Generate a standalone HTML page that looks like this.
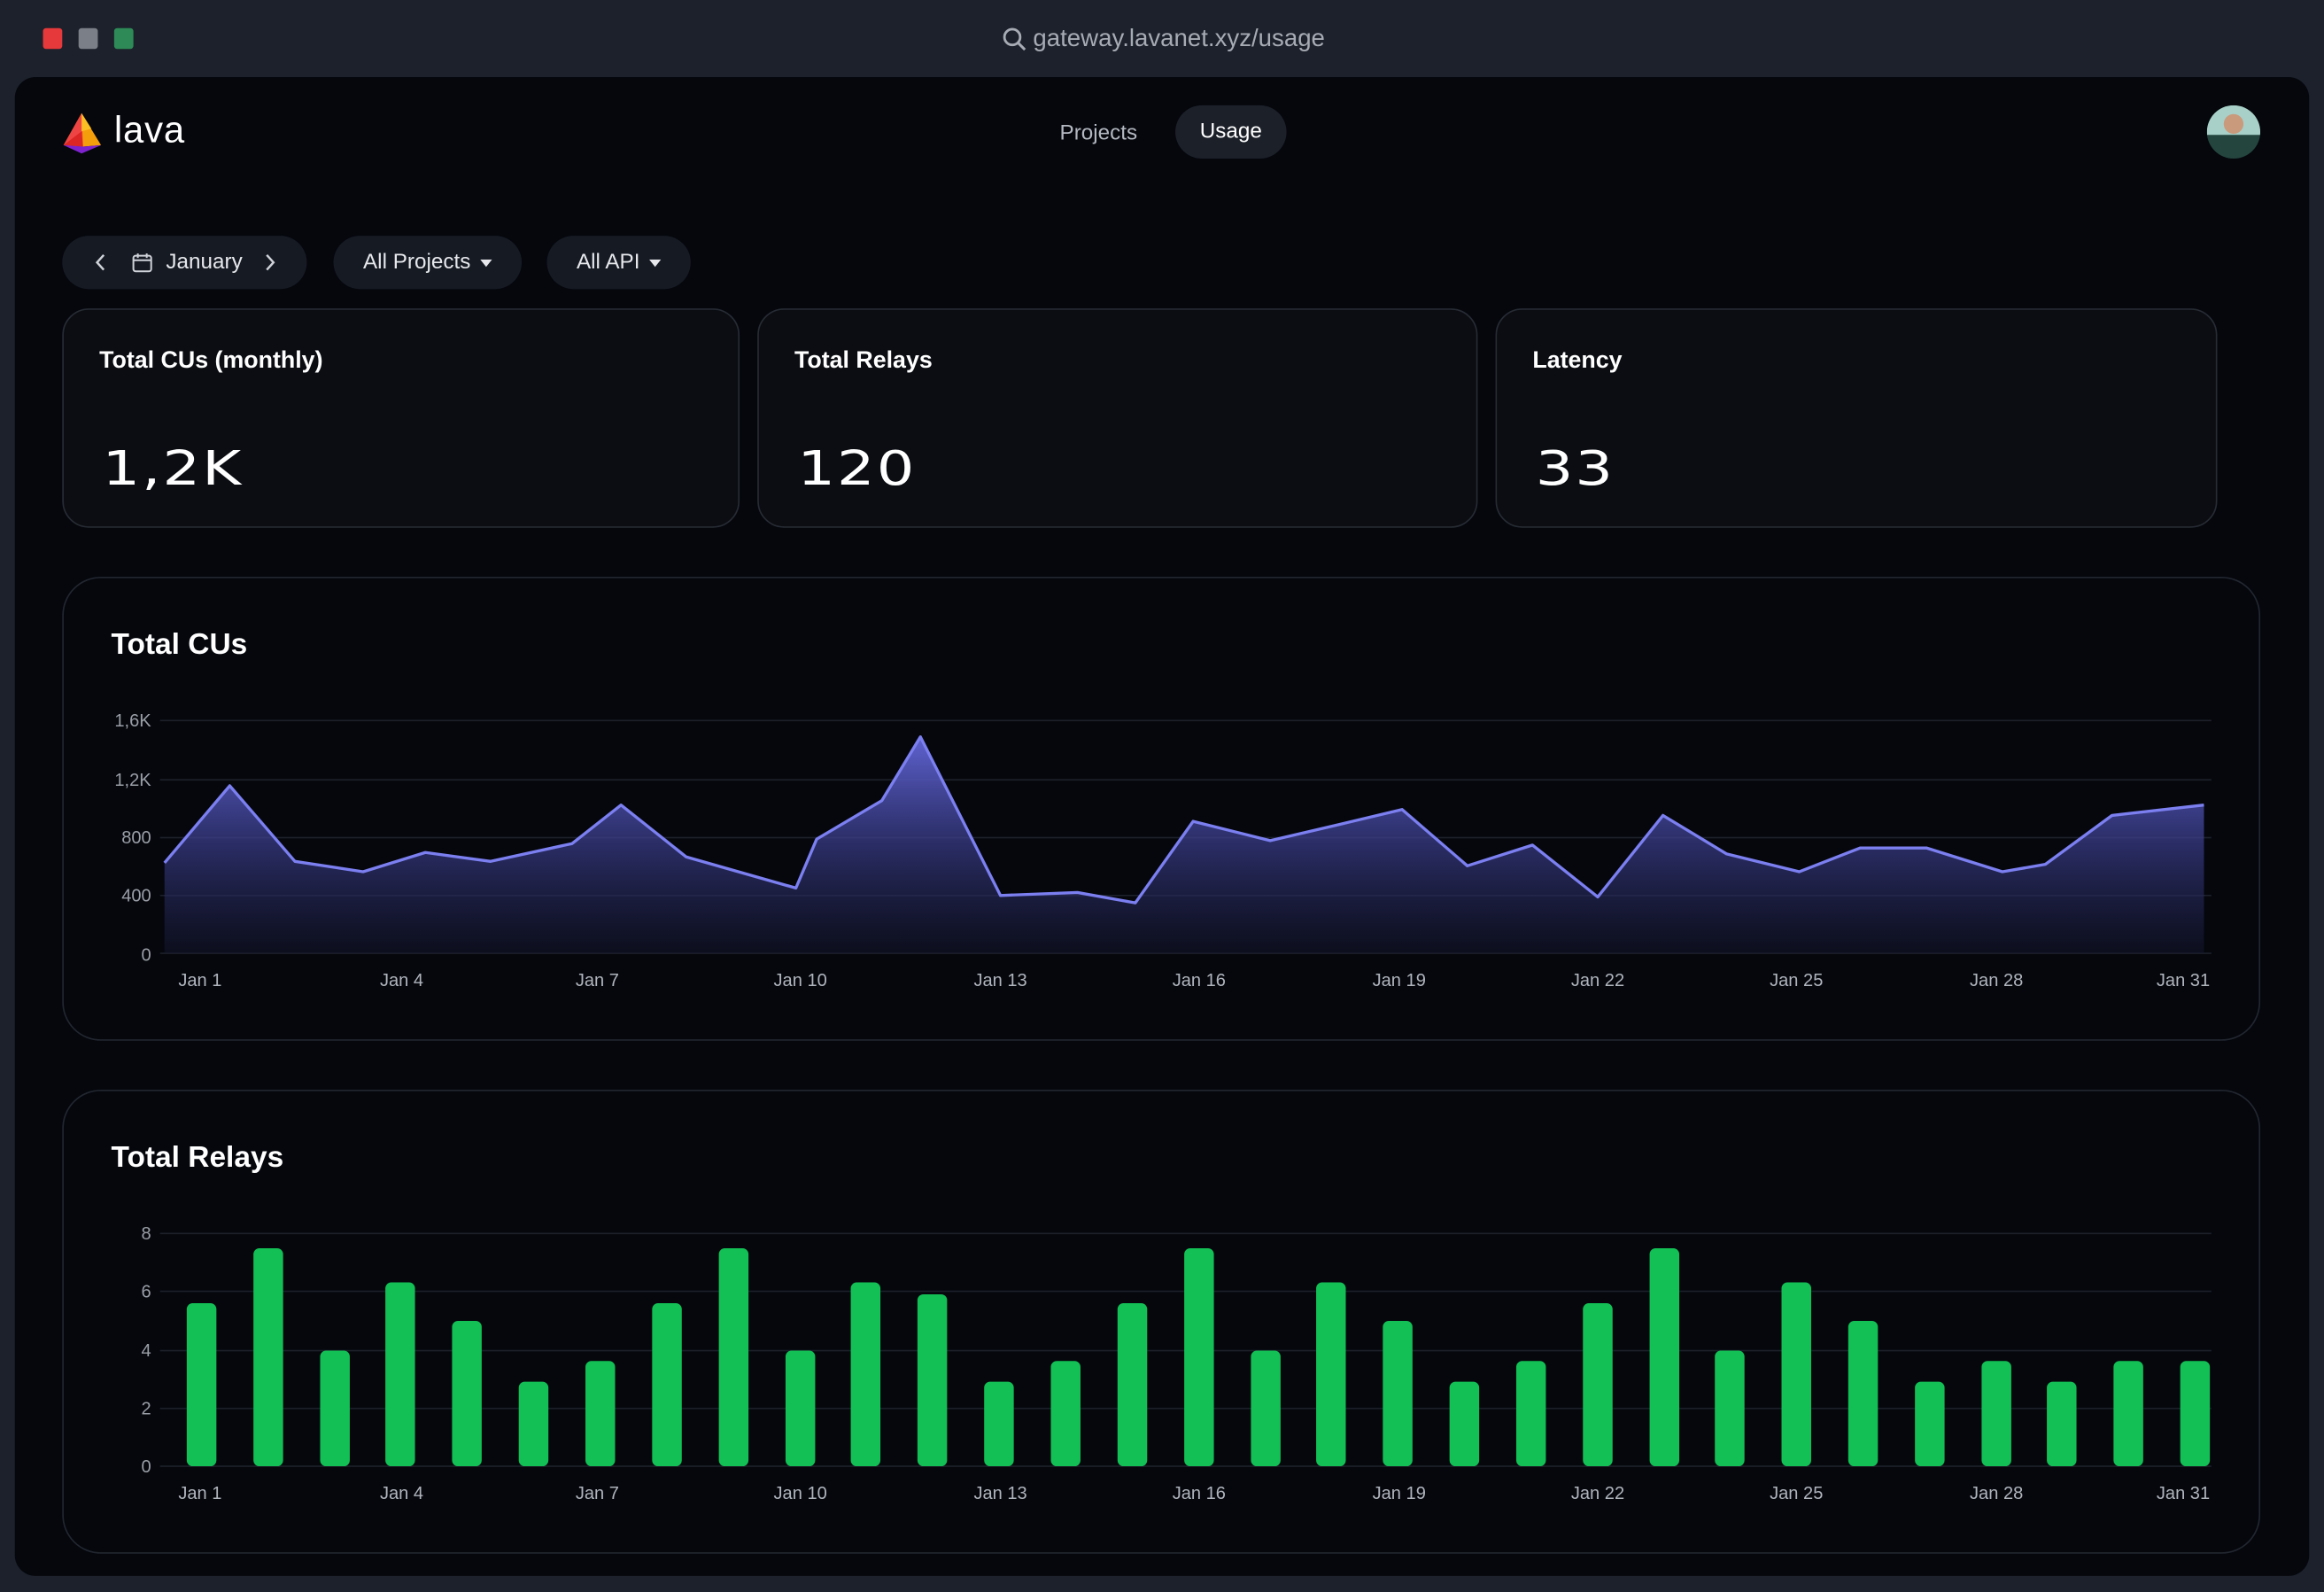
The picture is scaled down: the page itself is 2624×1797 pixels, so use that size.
<!DOCTYPE html>
<html><head><meta charset="utf-8"><style>
html,body{margin:0;padding:0;background:#1c212b;width:2624px;height:1796px;overflow:hidden}
#s{position:absolute;left:0;top:0;width:1568px;height:1074px;transform:scale(1.67347);transform-origin:0 0;font-family:"Liberation Sans",Arial,sans-serif;color:#fff}
.abs{position:absolute}
.pill{position:absolute;top:159px;height:36px;border-radius:18px;background:#161a23;color:#e6e8ec;font-size:14.5px;line-height:36px}
.card{position:absolute;top:208px;height:146px;border:1px solid #272b33;border-radius:18px;background:#0b0d12}
.card .t{position:absolute;left:24px;top:26px;font-size:16px;font-weight:bold}
.card .v{position:absolute;left:26px;top:88px;font-size:32px;letter-spacing:1px;font-family:"DejaVu Sans",sans-serif;transform:scaleX(1.25);transform-origin:0 0;font-weight:normal}
.big{position:absolute;left:42px;width:1481px;height:311px;border:1px solid #22262f;border-radius:26px;background:#05070d}
.big .t{position:absolute;left:32px;font-size:20px;font-weight:bold}
</style></head><body><div id="s">
<div class="abs" style="left:29px;top:19px;width:13px;height:14px;border-radius:2px;background:#e5393b"></div>
<div class="abs" style="left:53px;top:19px;width:13px;height:14px;border-radius:2px;background:#7b7f87"></div>
<div class="abs" style="left:77px;top:19px;width:13px;height:14px;border-radius:2px;background:#2e8b57"></div>
<svg class="abs" style="left:676px;top:18px" width="17" height="17" viewBox="0 0 17 17"><circle cx="7" cy="7" r="5.3" fill="none" stroke="#a6abb4" stroke-width="1.7"/><path d="M11 11l4.5 4.5" stroke="#a6abb4" stroke-width="1.8"/></svg>
<div class="abs" style="left:697px;top:17px;font-size:16.5px;color:#a6abb4">gateway.lavanet.xyz/usage</div>
<div class="abs" style="left:10px;top:52px;width:1548px;height:1011px;background:#05070d;border-radius:14px"></div>
<svg class="abs" style="left:41px;top:75px" width="30" height="29" viewBox="0 0 32 30"><polygon points="15,1 29,24 16,25 2,24" fill="#f59e0b"/><polygon points="15,1 2,24 16,25" fill="#ef4444"/><polygon points="2,24 16,25 15,14" fill="#dc2626"/><polygon points="2,24 15,30 29,24 16,25" fill="#7e22ce"/><polygon points="15,1 22,12 15,14" fill="#fbbf24"/></svg>
<div class="abs" style="left:77px;top:74px;font-size:25px;color:#fff;letter-spacing:0.5px">lava</div>
<div class="abs" style="left:715px;top:82px;font-size:14.5px;color:#b4b8c0">Projects</div>
<div class="abs" style="left:793px;top:71px;width:75px;height:36px;border-radius:18px;background:#1c2029;font-size:14.5px;line-height:37px;text-align:center;color:#fff">Usage</div>
<div class="abs" style="left:1489px;top:71px;width:36px;height:36px;border-radius:50%;background:radial-gradient(circle at 50% 35%,#c99a7c 0 22%,transparent 23%),linear-gradient(#a8d0c8 0 55%,#24453e 56%)"></div>
<div class="pill" style="left:42px;width:165px">
<svg class="abs" style="left:22px;top:12px" width="8" height="12" viewBox="0 0 8 12"><path d="M6 1L1.5 6L6 11" fill="none" stroke="#cfd2d8" stroke-width="1.5"/></svg>
<svg class="abs" style="left:47px;top:11px" width="14" height="14" viewBox="0 0 14 14"><rect x="1" y="2.5" width="12" height="10.5" rx="1.5" fill="none" stroke="#cfd2d8" stroke-width="1.2"/><path d="M4 1v3M10 1v3M1 5.5h12" stroke="#cfd2d8" stroke-width="1.2"/></svg>
<span style="position:absolute;left:70px">January</span>
<svg class="abs" style="left:136px;top:12px" width="8" height="12" viewBox="0 0 8 12"><path d="M2 1L6.5 6L2 11" fill="none" stroke="#cfd2d8" stroke-width="1.5"/></svg></div>
<div class="pill" style="left:225px;width:127px"><span style="position:absolute;left:20px">All Projects</span><svg class="abs" style="left:99px;top:16px" width="8" height="6"><path d="M0 0h8L4 5z" fill="#e6e8ec"/></svg></div>
<div class="pill" style="left:369px;width:97px"><span style="position:absolute;left:20px">All API</span><svg class="abs" style="left:69px;top:16px" width="8" height="6"><path d="M0 0h8L4 5z" fill="#e6e8ec"/></svg></div>
<div class="card" style="left:42px;width:455px"><div class="t">Total CUs (monthly)</div><div class="v">1,2K</div></div>
<div class="card" style="left:511px;width:484px"><div class="t">Total Relays</div><div class="v">120</div></div>
<div class="card" style="left:1009px;width:485px"><div class="t">Latency</div><div class="v">33</div></div>
<div class="big" style="top:389px"><div class="t" style="top:34px">Total CUs</div></div>
<div class="big" style="top:735px"><div class="t" style="top:34px">Total Relays</div></div>
<svg class="abs" style="left:0;top:0" width="1568" height="1074" viewBox="0 0 1568 1074" font-family="Liberation Sans,Arial,sans-serif">
<defs><linearGradient id="g" x1="0" x2="0" y1="497" y2="643" gradientUnits="userSpaceOnUse"><stop offset="0" stop-color="#6468dc" stop-opacity="0.95"/><stop offset="0.5" stop-color="#3a3d8a" stop-opacity="0.7"/><stop offset="1" stop-color="#14162e" stop-opacity="0.5"/></linearGradient>
<filter id="gl" x="-50%" y="-20%" width="200%" height="140%"><feGaussianBlur stdDeviation="3"/></filter></defs>
<g stroke="#1d2029" stroke-width="1"><path d="M108 486H1492M108 526H1492M108 565H1492M108 604H1492M108 643H1492"/><path d="M108 832H1492M108 871H1492M108 911H1492M108 950H1492M108 989H1492"/></g>
<g fill="#9a9ea6" font-size="12" text-anchor="end"><text x="102" y="490">1,6K</text><text x="102" y="530">1,2K</text><text x="102" y="569">800</text><text x="102" y="608">400</text><text x="102" y="648">0</text>
<text x="102" y="836">8</text><text x="102" y="875">6</text><text x="102" y="915">4</text><text x="102" y="954">2</text><text x="102" y="993">0</text></g>
<polygon fill="url(#g)" points="111,643 111,582 155,530 199,581 245,588 287,575 331,581 386,569 419,543 463,578 537,599 551,566 595,540 621,497 675,604 727,602 766,609 805,554 857,567 904,556 946,546 990,584 1034,570 1078,605 1122,550 1165,576 1214,588 1255,572 1300,572 1351,588 1380,583 1425,550 1487,543 1487,643"/>
<polyline fill="none" stroke="#7b7ff0" stroke-width="2" stroke-linejoin="round" points="111,582 155,530 199,581 245,588 287,575 331,581 386,569 419,543 463,578 537,599 551,566 595,540 621,497 675,604 727,602 766,609 805,554 857,567 904,556 946,546 990,584 1034,570 1078,605 1122,550 1165,576 1214,588 1255,572 1300,572 1351,588 1380,583 1425,550 1487,543"/>
<g fill="#b0b4bc" font-size="12" text-anchor="middle"><text x="135" y="665">Jan 1</text><text x="271" y="665">Jan 4</text><text x="403" y="665">Jan 7</text><text x="540" y="665">Jan 10</text><text x="675" y="665">Jan 13</text><text x="809" y="665">Jan 16</text><text x="944" y="665">Jan 19</text><text x="1078" y="665">Jan 22</text><text x="1212" y="665">Jan 25</text><text x="1347" y="665">Jan 28</text><text x="1473" y="665">Jan 31</text></g>
<g fill="#b0b4bc" font-size="12" text-anchor="middle"><text x="135" y="1011">Jan 1</text><text x="271" y="1011">Jan 4</text><text x="403" y="1011">Jan 7</text><text x="540" y="1011">Jan 10</text><text x="675" y="1011">Jan 13</text><text x="809" y="1011">Jan 16</text><text x="944" y="1011">Jan 19</text><text x="1078" y="1011">Jan 22</text><text x="1212" y="1011">Jan 25</text><text x="1347" y="1011">Jan 28</text><text x="1473" y="1011">Jan 31</text></g>
<g id="bars" fill="#12c055">
<rect x="126" y="879" width="20" height="110" rx="4"/><rect x="171" y="842" width="20" height="147" rx="4"/><rect x="216" y="911" width="20" height="78" rx="4"/><rect x="260" y="865" width="20" height="124" rx="4"/><rect x="305" y="891" width="20" height="98" rx="4"/><rect x="350" y="932" width="20" height="57" rx="4"/><rect x="395" y="918" width="20" height="71" rx="4"/><rect x="440" y="879" width="20" height="110" rx="4"/><rect x="485" y="842" width="20" height="147" rx="4"/><rect x="530" y="911" width="20" height="78" rx="4"/><rect x="574" y="865" width="20" height="124" rx="4"/><rect x="619" y="873" width="20" height="116" rx="4"/><rect x="664" y="932" width="20" height="57" rx="4"/><rect x="709" y="918" width="20" height="71" rx="4"/><rect x="754" y="879" width="20" height="110" rx="4"/><rect x="799" y="842" width="20" height="147" rx="4"/><rect x="844" y="911" width="20" height="78" rx="4"/><rect x="888" y="865" width="20" height="124" rx="4"/><rect x="933" y="891" width="20" height="98" rx="4"/><rect x="978" y="932" width="20" height="57" rx="4"/><rect x="1023" y="918" width="20" height="71" rx="4"/><rect x="1068" y="879" width="20" height="110" rx="4"/><rect x="1113" y="842" width="20" height="147" rx="4"/><rect x="1157" y="911" width="20" height="78" rx="4"/><rect x="1202" y="865" width="20" height="124" rx="4"/><rect x="1247" y="891" width="20" height="98" rx="4"/><rect x="1292" y="932" width="20" height="57" rx="4"/><rect x="1337" y="918" width="20" height="71" rx="4"/><rect x="1381" y="932" width="20" height="57" rx="4"/><rect x="1426" y="918" width="20" height="71" rx="4"/><rect x="1471" y="918" width="20" height="71" rx="4"/>
</g>
</svg>
</div></body></html>
